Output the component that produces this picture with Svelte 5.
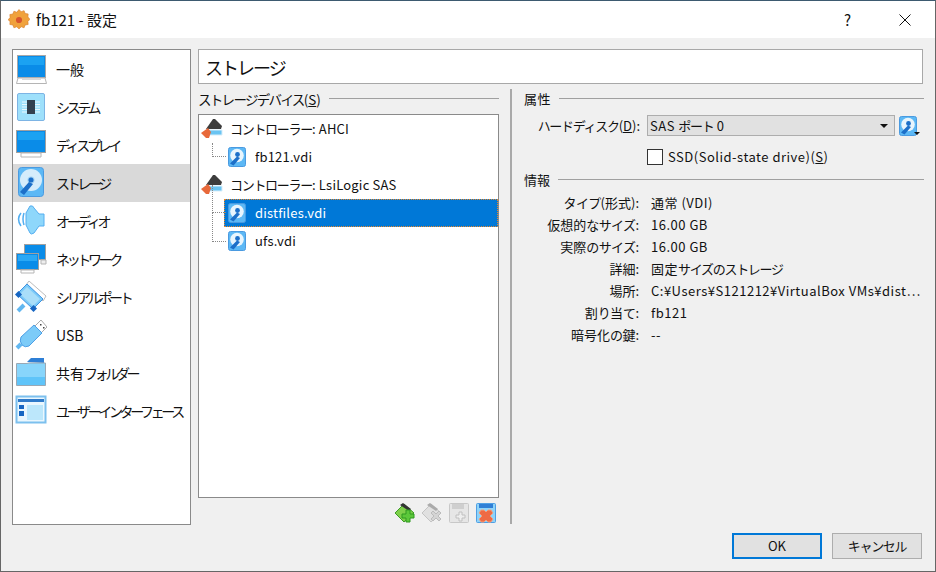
<script>
  const nav = [
    ['一般', 'general'], ['システム', 'system'], ['ディスプレイ', 'display'], ['ストレージ', 'storage'], ['オーディオ', 'audio'],
    ['ネットワーク', 'network'], ['シリアルポート', 'serial'], ['USB', 'usb'], ['共有フォルダー', 'folder'], ['ユーザーインターフェース', 'ui']
  ];
  const info = [
    ['タイプ(形式):', '通常 (VDI)'], ['仮想的なサイズ:', '16.00 GB'], ['実際のサイズ:', '16.00 GB'], ['詳細:', '固定サイズのストレージ'],
    ['場所:', 'C:¥Users¥S121212¥VirtualBox VMs¥dist⋯'], ['割り当て:', 'fb121'], ['暗号化の鍵:', '--']
  ];
  const segs = (s) => s.split(/([\u3040-\u30ff]+)/).filter(Boolean);
  const isKana = (s) => /^[\u3040-\u30ff]/.test(s);
</script>

{#snippet t(str)}
  {#each segs(str) as part}<span class:kn={isKana(part)}>{part}</span>{/each}
{/snippet}

{#snippet disk(w, h)}
  <svg width={w} height={h} viewBox="0 0 18 20" class="icon">
    <rect x=".5" y=".5" width="17" height="19" rx="2" fill="#5cb8f5" stroke="#4a9ae0"/>
    <circle cx="9" cy="8.500" r="6.800" fill="#e8f5fd"/>
    <circle cx="9.500" cy="7.500" r="2.400" fill="#1c6fc9"/>
    <path d="M9 9.500 L12 11 L5.500 18.500 L2 16.500Z" fill="#1c6fc9"/>
  </svg>
{/snippet}

{#snippet ctrl()}
  <svg width="24" height="22" viewBox="0 0 24 22" class="icon">
    <path d="M5 11 L12 1 L14 1 L21 8 L20 11Z" fill="#3d3d3d"/>
    <path d="M7 12H21V17H7Z" fill="#6ac4f2" stroke="#d8eefb"/>
    <path d="M0 15 L7 10 L10 14 L8 20 L5 20Z" fill="#e8693a"/>
  </svg>
{/snippet}

{#snippet navIcon(k)}
  <svg width="32" height="32" viewBox="0 0 32 32" class="icon">
    {#if k === 'general'}
      <rect x="2.500" y="2.500" width="28" height="22" fill="#0a8ce8" stroke="#a8a8a8"/>
      <path d="M4 4h25v8H4z" fill="#1ba2f2"/>
      <path d="M1.500 30.500 L3 25 H30 L31.500 30.500Z" fill="#fff" stroke="#b5b5b5"/>
      <path d="M7 25h19v2H7z" fill="#d8d8d8"/>
    {:else if k === 'system'}
      <rect x="2.500" y="2.500" width="27" height="27" rx="1.500" fill="#9ee0fb" stroke="#7db4e4"/>
      <path d="M7 11h18M7 13.500h18M7 16h18M7 18.500h18M7 21h18" stroke="#eaf8fe"/>
      <rect x="12" y="9" width="8" height="14" fill="#33404f"/>
    {:else if k === 'display'}
      <rect x="1.500" y="1.500" width="29" height="22" fill="#0a8ce8" stroke="#a0a0a0"/>
      <path d="M3 3h26v8H3z" fill="#1ba2f2"/>
      <path d="M6 24h20v4H6z" fill="#fff" stroke="#b5b5b5"/>
    {:else if k === 'storage'}
      <rect x="3.500" y=".5" width="25" height="29" rx="3" fill="#5cb8f5" stroke="#4a9ae0"/>
      <circle cx="16" cy="13" r="11" fill="#d5ecfb"/>
      <circle cx="16" cy="13" r="3.500" fill="#9fd0f2"/>
      <circle cx="16" cy="13" r="2.500" fill="#1c6fc9"/>
      <path d="M14 15 L18 17 L9 28 L5 25Z" fill="#1c6fc9"/>
    {:else if k === 'audio'}
      <path d="M6 8 Q1 14 6 21" fill="none" stroke="#52aef0" stroke-width="1.500"/>
      <path d="M9 8 Q7 14 9 20" fill="none" stroke="#52aef0" stroke-width="1.500"/>
      <path d="M11 8 L15 1 Q18 0 19 3 L24 9 H29 V21 H24 L19 28 Q16 30 15 28 L11 20Z" fill="#8ed7fb" stroke="#54aef0"/>
    {:else if k === 'network'}
      <rect x="9.500" y="1.500" width="21" height="15" fill="#0a8ce8" stroke="#a0a0a0"/>
      <path d="M26 17h5v4h-5z" fill="#eee" stroke="#b5b5b5"/>
      <rect x="1.500" y="10.500" width="22" height="16" fill="#0a8ce8" stroke="#a0a0a0"/>
      <path d="M3 12h19v6H3z" fill="#2aa8f5"/>
      <path d="M6 27h13v3H6z" fill="#fff" stroke="#b5b5b5"/>
    {:else if k === 'serial'}
      <path d="M14 0 L31 15 L28 20 L11 4Z" fill="#fff" stroke="#bbb"/>
      <path d="M2 13 L12 3 L28 18 L18 28Z" fill="#7ccbf8" stroke="#3d92e2"/>
      <path d="M5 13 L12 6 L25 18 L18 25Z" fill="#a9def9"/>
      <rect x="1" y="11" width="5" height="5" fill="#1766c2" transform="rotate(45 3.500 13.500)"/>
      <rect x="16" y="25" width="5" height="5" fill="#1766c2" transform="rotate(45 18.500 27.500)"/>
      <path d="M9 24 L3 30" stroke="#62b7f0" stroke-width="4"/>
    {:else if k === 'usb'}
      <path d="M20 7 L26 1 L32 8 L26 14Z" fill="#fff" stroke="#aaa"/>
      <path d="M25 5h1.500v1.500H25zM28 8h1.500v1.500H28z" fill="#444"/>
      <path d="M6 18 L19 6 L27 14 L14 27 Q10 29 7 26 Q4 22 6 18Z" fill="#7ccbf8" stroke="#4d9fe6"/>
      <path d="M6 25 L2 29" stroke="#62b7f0" stroke-width="4"/>
    {:else if k === 'folder'}
      <path d="M12 5 L16 1 H29 V6Z" fill="#2e7fd6"/>
      <path d="M1.500 6.500 H12 L14 6 H30.500 V28.500 H1.500Z" fill="#88d5fb" stroke="#9aa8b4"/>
      <path d="M2 20h28v8H2z" fill="#5fc4f9"/>
    {:else}
      <rect x="1.500" y="1.500" width="29" height="26" fill="#eaf7fe" stroke="#7cc0ee" stroke-width="2"/>
      <path d="M3 4h26v3H3z" fill="#2f7ac9"/>
      <path d="M4 10h5v4H4zM4 16h5v5H4z" fill="#1766c2"/>
      <path d="M12 10h16v15H12z" fill="#bce7fb"/>
    {/if}
  </svg>
{/snippet}

<div class="window">
  <header class="title">
    <svg width="22" height="22" viewBox="0 0 20 20" class="icon">
      <path d="M10 .5l2 2 2.600-1 1 2.600 2.700.4-.2 2.800 1.800 2-1.800 2 .2 2.800-2.700.4-1 2.600-2.600-1-2 2-2-2-2.600 1-1-2.600-2.700-.4.2-2.800L.1 9.800l1.800-2-.2-2.800 2.700-.4 1-2.600 2.600 1z" fill="#f0a23c" stroke="#d98030" stroke-width=".6"/>
      <circle cx="10" cy="10" r="2.800" fill="#d8552e"/>
    </svg>
    <span class="title-text">fb121 - 設定</span>
    <span class="help">?</span>
    <svg width="12" height="12" viewBox="0 0 12 12" class="close"><path d="M.5 .5 L11.500 11.500 M11.500 .5 L.5 11.500" stroke="#111" fill="none"/></svg>
  </header>

  <div class="body">
    <nav class="nav">
      {#each nav as [label, key]}
        <div class="nav-row" class:active={key === 'storage'}>
          <span class="nav-ic">{@render navIcon(key)}</span>
          <span class="nav-text">{@render t(label)}</span>
        </div>
      {/each}
    </nav>

    <main class="content">
      <div class="page-title">{@render t('ストレージ')}</div>
      <div class="columns">
        <section class="left">
          <div class="group"><span>{@render t('ストレージデバイス(')}<u>S</u>)</span><i></i></div>
          <div class="tree">
            <div class="t-row ctrl">{@render ctrl()}<span>{@render t('コントローラー: AHCI')}</span></div>
            <div class="t-row item last-one">{@render disk(18, 20)}<span>fb121.vdi</span></div>
            <div class="t-row ctrl">{@render ctrl()}<span>{@render t('コントローラー: LsiLogic SAS')}</span></div>
            <div class="t-row item selected">{@render disk(18, 20)}<span>distfiles.vdi</span></div>
            <div class="t-row item last-two">{@render disk(18, 20)}<span>ufs.vdi</span></div>
          </div>
          <div class="tools">
            <svg width="22" height="22" viewBox="0 0 22 22"><path d="M1 11 L10 2 L20 11 L10 20Z" fill="#7ed04a" stroke="#3d9a28"/><path d="M6 3 L9 1 L17 7 L15 9Z" fill="#333"/><path d="M12 8h4v4h4v4h-4v4h-4v-4H8v-4h4z" fill="#5cc83a" stroke="#2f9a20"/></svg>
            <svg width="22" height="22" viewBox="0 0 22 22"><path d="M1 11 L10 2 L20 11 L10 20Z" fill="#e0e0e0" stroke="#c4c4c4"/><path d="M6 3 L9 1 L17 7 L15 9Z" fill="#aaa"/><path d="M10 11l2-2 3 3 3-3 2 2-3 3 3 3-2 2-3-3-3 3-2-2 3-3z" fill="#d4d4d4" stroke="#bbb"/></svg>
            <svg width="22" height="22" viewBox="0 0 22 22"><rect x="1.500" y="1.500" width="19" height="19" rx="1" fill="#e6e6e6" stroke="#c8c8c8"/><path d="M4 2h12v5H4z" fill="#cfcfcf"/><path d="M11 10h3v3h3v3h-3v3h-3v-3H8v-3h3z" fill="#eee" stroke="#c0c0c0"/></svg>
            <svg width="22" height="22" viewBox="0 0 22 22"><rect x="1.500" y="1.500" width="19" height="19" rx="1" fill="#8fd3f8" stroke="#4f9fe4"/><path d="M4 2h14v4H4z" fill="#2f7fd6"/><path d="M6 8h3l2 2 2-2h3l2 3-3 3 3 3-2 3h-3l-2-2-2 2H6l-2-3 3-3-3-3z" fill="#ee6a45" stroke="#f0a080"/></svg>
          </div>
        </section>

        <div class="divider"></div>

        <section class="right">
          <div class="group"><span>属性</span><i></i></div>
          <div class="field">
            <label class="lbl" for="port">{@render t('ハードディスク(')}<u>D</u>):</label>
            <div class="combo" id="port"><span>{@render t('SAS ポート 0')}</span><b></b></div>
            <span class="pick">{@render disk(18, 20)}<b></b></span>
          </div>
          <div class="check"><span class="box"></span><span>SSD(Solid-state drive)(<u>S</u>)</span></div>
          <div class="group info-head"><span>情報</span><i></i></div>
          <div class="info">
            {#each info as [k, v]}
              <div class="k">{@render t(k)}</div>
              <div class="v">{@render t(v)}</div>
            {/each}
          </div>
        </section>
      </div>
    </main>
  </div>

  <footer class="foot">
    <button class="default">OK</button>
    <button>{@render t('キャンセル')}</button>
  </footer>
</div>

<style>
  :global(body) { margin: 0; }
  .window {
    --kn: -.1em;
    width: 936px; height: 572px; box-sizing: border-box;
    border: 1px solid #666; border-top-color: #3d5a70;
    background: #f0f0f0; display: flex; flex-direction: column; overflow: hidden;
    font: 13.500px/20px "Noto Sans CJK JP", "Liberation Sans", sans-serif; color: #111;
  }
  .kn { letter-spacing: var(--kn); }
  .icon { display: block; flex: none; }
  .title { height: 37px; background: #fff; display: flex; align-items: center; padding: 0 24px 0 7px; flex: none; }
  .title-text { margin-left: 6px; font-size: 15px; flex: 1; }
  .help { font-size: 15px; margin-right: 48px; }
  .body { flex: 1; display: flex; padding: 11px 12px 0 11px; gap: 7px; min-height: 0; }
  .nav { width: 177px; height: 474px; flex: none; background: #fff; border: 1px solid #8a8a8a; --kn: -.24em; }
  .nav-row { height: 38px; display: flex; align-items: center; padding-left: 2px; font-size: 14px; white-space: nowrap; }
  .nav-ic { width: 41px; flex: none; }
  .active { background: #d9d9d9; }
  .content { flex: 1; min-width: 0; }
  .page-title { height: 33px; background: #fff; border: 1px solid #a8a8a8; display: flex; align-items: center; padding-left: 6px; font-size: 18px; --kn: -.11em; }
  .columns { display: flex; margin-top: 5px; }
  .left { width: 301px; flex: none; }
  .group { display: flex; align-items: center; gap: 8px; height: 20px; --kn: -.125em; white-space: nowrap; }
  .group i { flex: 1; height: 1px; background: #a0a0a0; margin-top: -2px; }
  .tree { height: 382px; margin-top: 5px; background: #fff; border: 1px solid #8a8a8a; }
  .t-row { height: 28px; display: flex; align-items: center; position: relative; box-sizing: border-box; letter-spacing: .2px; }
  .ctrl { padding-left: 2px; gap: 5px; font-size: 13px; }
  .item { margin-left: 25px; padding-left: 4px; gap: 9px; font-size: 13px; }
  .item::before { content: ""; position: absolute; left: -12px; width: 14px; top: -14px; height: 28px; border-left: 1px dotted #888; border-bottom: 1px dotted #888; box-sizing: border-box; }
  .last-one::before { top: 0; height: 14px; }
  .last-two::before { top: -14px; height: 29px; }
  .selected { background: #0078d7; color: #fff; outline: 1px dotted #e8872a; outline-offset: -1px; }
  .tools { display: flex; justify-content: flex-end; gap: 5px; padding: 4px 2px 0 0; }
  .tools svg { display: block; }
  .divider { width: 2px; height: 435px; margin: 0 0 0 11px; background: #a9a9a9; flex: none; }
  .right { flex: 1; padding-left: 12px; min-width: 0; font-size: 13px; margin-right: -1px; letter-spacing: .5px; --kn: -.1em; }
  .field { display: flex; align-items: center; margin-top: 6px; height: 21px; }
  .lbl { width: 116px; text-align: right; flex: none; white-space: nowrap; letter-spacing: 0; }
  .combo { margin-left: 7px; height: 19px; background: #e1e1e1; border: 1px solid #adadad; display: flex; align-items: center; justify-content: space-between; padding: 0 6px 0 2px; width: 238px; }
  .combo b { width: 0; height: 0; border: 4px solid transparent; border-top: 4px solid #111; border-bottom: 0; }
  .pick { position: relative; margin-left: 4px; }
  .pick b { position: absolute; right: -3px; bottom: 1px; width: 0; height: 0; border: 3px solid transparent; border-top-color: #111; border-bottom: 0; }
  .check { display: flex; align-items: center; margin: 12px 0 0 123px; gap: 5px; height: 18px; }
  .box { width: 14px; height: 14px; background: #fff; border: 1px solid #333; flex: none; }
  .info-head { margin-top: 4px; letter-spacing: 0; }
  .info { display: grid; grid-template-columns: 115px 1fr; column-gap: 12px; grid-auto-rows: 22px; margin-top: 2px; }
  .k { text-align: right; white-space: nowrap; line-height: 22px; letter-spacing: 0; --kn: -.05em; }
  .v { white-space: nowrap; line-height: 22px; overflow: hidden; }
  .foot { height: 38px; box-sizing: border-box; flex: none; display: flex; justify-content: flex-end; gap: 10px; padding: 0 13px 12px 0; align-items: flex-start; }
  button { width: 90px; height: 26px; box-sizing: border-box; background: #e1e1e1; border: 1px solid #adadad; font: inherit; font-size: 13px; color: #111; padding: 0; }
  .default { border: 2px solid #0078d7; }
</style>
